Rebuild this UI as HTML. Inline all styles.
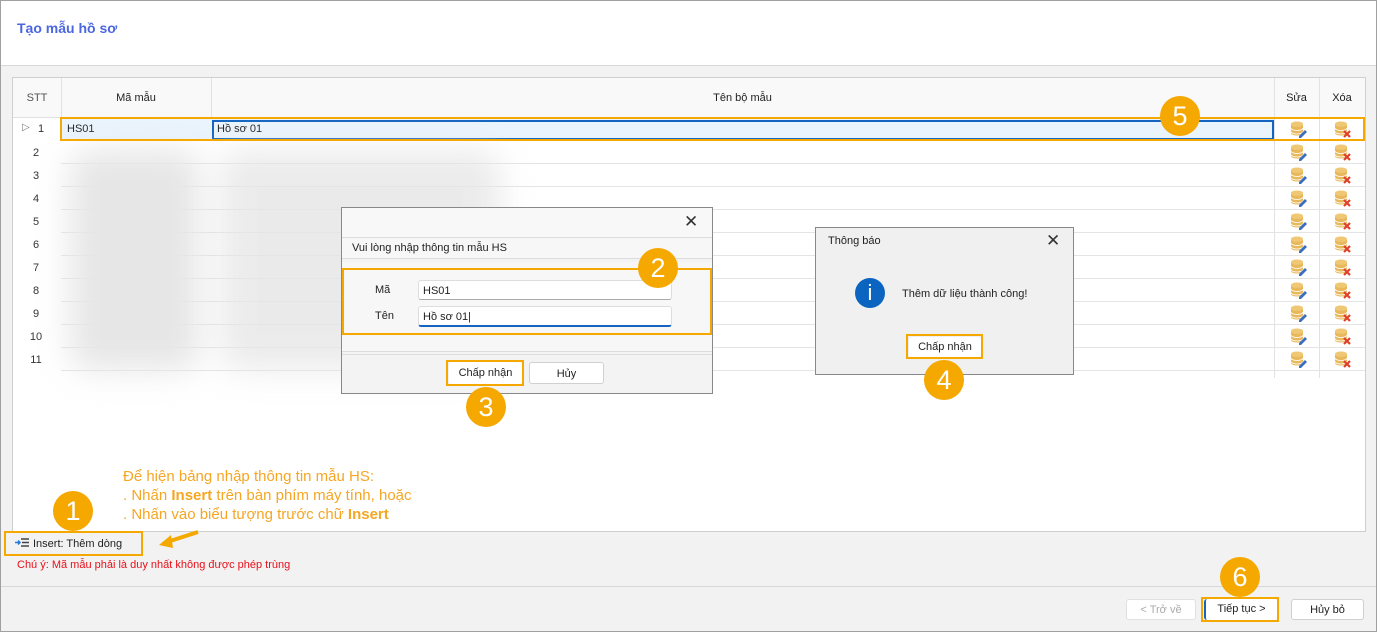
<!DOCTYPE html>
<html><head><meta charset="utf-8"><style>
*{box-sizing:border-box;margin:0;padding:0}
body{width:1377px;height:632px;position:relative;overflow:hidden;background:#f2f2f2;font-family:"Liberation Sans","DejaVu Sans",sans-serif;font-size:11px;color:#222}
.a{position:absolute}
.frame{left:0;top:0;width:1377px;height:632px;border:1px solid #a0a0a0}
.hdr{left:1px;top:1px;width:1375px;height:65px;background:#fff;border-bottom:1px solid #d8d8d8}
.title{left:17px;top:20px;font-size:14px;font-weight:bold;color:#4a66e0}
.grid{left:12px;top:77px;width:1354px;height:455px;background:#fff;border:1px solid #cfcfcf}
.vl{position:absolute;top:0;width:1px;background:#e2e2e2}
.hl{position:absolute;height:1px;background:#e4e4e4}
.num{position:absolute;width:48px;text-align:center;color:#333;font-size:11px}
.ob{position:absolute;border:2px solid #f5a800}
.circ{position:absolute;width:40px;height:40px;border-radius:50%;background:#f5a800;color:#fff;font-size:27px;text-align:center;line-height:40px}
.btn{position:absolute;background:#fff;border:1px solid #d0d0d0;border-radius:3px;text-align:center;font-size:11px;line-height:22px}
.blur{position:absolute;background:#e6e6e6;filter:blur(16px);border-radius:20px}
</style></head><body>
<div class="a hdr"></div>
<div class="a title">Tạo mẫu hồ sơ</div>
<div class="a grid">
 <div style="position:absolute;left:0;top:0;width:1352px;height:40px;background:#f9f9f9;border-bottom:1px solid #e0e0e0"></div>
 <div class="vl" style="left:48px;height:40px"></div>
 <div class="vl" style="left:198px;height:40px"></div>
 <div class="vl" style="left:1261px;height:300px"></div>
 <div class="vl" style="left:1306px;height:300px"></div>
 <div class="a" style="left:0;top:14px;width:48px;text-align:center;color:#555">STT</div>
 <div class="a" style="left:48px;top:14px;width:150px;text-align:center">Mã mẫu</div>
 <div class="a" style="left:198px;top:14px;width:1063px;text-align:center">Tên bộ mẫu</div>
 <div class="a" style="left:1261px;top:14px;width:45px;text-align:center">Sửa</div>
 <div class="a" style="left:1306px;top:14px;width:46px;text-align:center">Xóa</div>
 <div class="a" style="left:48px;top:41px;width:1213px;height:22px;background:#eaf4fd"></div>
 <div class="a" style="left:199px;top:42px;width:1062px;height:20px;border:2px solid #1565c0"></div>
 <div class="a" style="left:54px;top:45px">HS01</div>
 <div class="a" style="left:204px;top:45px">Hồ sơ 01</div>
 <div class="a" style="left:9px;top:44px;color:#777;font-size:10px">▷</div>
</div>
<div id="rows"></div>
<div class="blur" style="left:70px;top:150px;width:130px;height:220px"></div>
<div class="blur" style="left:220px;top:150px;width:280px;height:220px;opacity:.8"></div>

<!-- dialog 1 -->
<div class="a" style="left:341px;top:207px;width:372px;height:187px;background:#f3f3f3;border:1px solid #888"></div>
<div class="a" style="left:342px;top:208px;width:370px;height:29px;background:#f8f8f8"></div>
<div class="a" style="left:684px;top:212px;font-size:17px;color:#333">✕</div>
<div class="a" style="left:342px;top:237px;width:370px;height:22px;background:#f7f7f7;border-top:1px solid #ddd;border-bottom:1px solid #ddd"></div>
<div class="a" style="left:352px;top:242px">Vui lòng nhập thông tin mẫu HS</div>
<div class="a" style="left:342px;top:262px;width:370px;height:90px;background:#f7f7f7;border-bottom:1px solid #ddd"></div>
<div class="a" style="left:375px;top:284px">Mã</div>
<div class="a" style="left:418px;top:280px;width:254px;height:20px;background:#fff;border:1px solid #ddd;border-bottom-color:#aaa;border-radius:3px;padding:4px 4px">HS01</div>
<div class="a" style="left:375px;top:310px">Tên</div>
<div class="a" style="left:418px;top:306px;width:254px;height:21px;background:#fff;border:1px solid #ddd;border-bottom:2px solid #1565c0;border-radius:3px;padding:4px 4px">Hồ sơ 01|</div>
<div class="ob" style="left:342px;top:268px;width:370px;height:67px"></div>
<div class="a" style="left:342px;top:354px;width:370px;height:39px;background:#f3f3f3;border-top:1px solid #ddd"></div>
<div class="btn" style="left:449px;top:362px;width:73px;height:22px;border:none">Chấp nhận</div>
<div class="ob" style="left:446px;top:360px;width:78px;height:26px"></div>
<div class="btn" style="left:529px;top:362px;width:75px;height:22px">Hủy</div>

<!-- dialog 2 -->
<div class="a" style="left:815px;top:227px;width:259px;height:148px;background:#f0f0f0;border:1px solid #888"></div>
<div class="a" style="left:828px;top:235px">Thông báo</div>
<div class="a" style="left:1046px;top:231px;font-size:17px;color:#333">✕</div>
<div class="a" style="left:855px;top:278px;width:30px;height:30px;border-radius:50%;background:#0a64c0;color:#fff;text-align:center;font-size:22px;line-height:30px">i</div>
<div class="a" style="left:902px;top:288px">Thêm dữ liệu thành công!</div>
<div class="btn" style="left:909px;top:337px;width:72px;height:20px;border:none;line-height:21px">Chấp nhận</div>
<div class="ob" style="left:906px;top:334px;width:77px;height:25px"></div>

<!-- notes -->
<div class="a" style="left:123px;top:467px;color:#f5a623;font-size:15px;line-height:19px">Để hiện bảng nhập thông tin mẫu HS:<br>. Nhấn <b>Insert</b> trên bàn phím máy tính, hoặc<br>. Nhấn vào biểu tượng trước chữ <b>Insert</b></div>
<svg class="a" style="left:155px;top:528px" width="50" height="25"><line x1="43" y1="4" x2="12" y2="14" stroke="#f5a800" stroke-width="4"/><polygon points="4,17 16,7 18,20" fill="#f5a800"/></svg>
<div class="ob" style="left:4px;top:531px;width:139px;height:25px;background:#f2f2f2"></div>
<svg class="a" style="left:15px;top:538px" width="14" height="10"><path d="M0 4.5h5M3 2.5l2 2-2 2" stroke="#1e7ad8" stroke-width="1.5" fill="none"/><path d="M6 1h8M7 4.5h7M6 8h8" stroke="#444" stroke-width="1.4"/></svg>
<div class="a" style="left:33px;top:538px">Insert: Thêm dòng</div>
<div class="a" style="left:17px;top:559px;color:#e8101a">Chú ý: Mã mẫu phải là duy nhất không được phép trùng</div>
<div class="a" style="left:1px;top:586px;width:1375px;height:1px;background:#d8d8d8"></div>

<div class="btn" style="left:1126px;top:599px;width:70px;height:21px;color:#aaa;border-color:#e0e0e0;line-height:21px">&lt; Trở về</div>
<div class="btn" style="left:1204px;top:599px;width:73px;height:21px;border:none;border-left:2px solid #1565c0;line-height:21px">Tiếp tục &gt;</div>
<div class="ob" style="left:1201px;top:597px;width:78px;height:25px"></div>
<div class="btn" style="left:1291px;top:599px;width:73px;height:21px;line-height:21px">Hủy bỏ</div>

<div class="ob" style="left:60px;top:117px;width:1305px;height:24px;border-width:2px"></div>

<div class="circ" style="left:53px;top:491px">1</div>
<div class="circ" style="left:638px;top:248px">2</div>
<div class="circ" style="left:466px;top:387px">3</div>
<div class="circ" style="left:924px;top:360px">4</div>
<div class="circ" style="left:1160px;top:96px">5</div>
<div class="circ" style="left:1220px;top:557px">6</div>
<div class="a frame"></div>

<script>
var h='';
for(var i=0;i<11;i++){
 var y=118+i*23;
 h+='<div class="hl" style="left:61px;top:'+(y+22)+'px;width:1304px"></div>';
 if(i>0)h+='<div class="num" style="left:12px;top:'+(y+6)+'px">'+(i+1)+'</div>';
 else h+='<div class="num" style="left:17px;top:'+(y+5)+'px">1</div>';
 var db='<ellipse cx="7" cy="3" rx="6" ry="2.5" fill="#f0c873"/><path d="M1 3v9c0 1.4 2.7 2.5 6 2.5s6-1.1 6-2.5V3c0 1.4-2.7 2.5-6 2.5S1 4.4 1 3z" fill="#e8b85a"/><path d="M1 7c0 1.4 2.7 2.5 6 2.5s6-1.1 6-2.5M1 10.5c0 1.4 2.7 2.5 6 2.5s6-1.1 6-2.5" stroke="#fff" stroke-width=".8" fill="none"/>';
 h+='<svg class="a" style="left:1290px;top:'+(y+3)+'px" width="18" height="18">'+db+'<path d="M9 15l6-6 2 2-6 6h-2z" fill="#3a6fc0"/></svg>';
 h+='<svg class="a" style="left:1334px;top:'+(y+3)+'px" width="18" height="18">'+db+'<path d="M10 10l6 6M16 10l-6 6" stroke="#e0402a" stroke-width="2.2"/></svg>';
}
document.getElementById('rows').innerHTML=h;
</script>
</body></html>
